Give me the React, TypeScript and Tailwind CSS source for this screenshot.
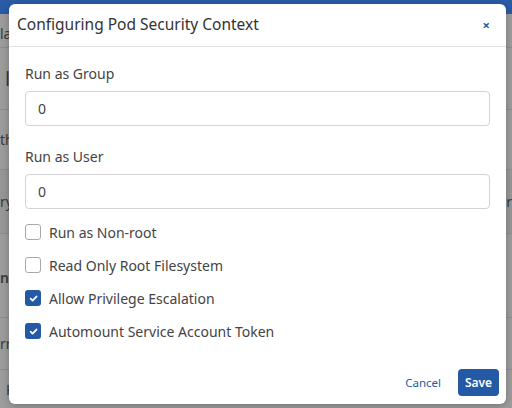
const checks = [
  { label: 'Run as Non-root', on: false },
  { label: 'Read Only Root Filesystem', on: false },
  { label: 'Allow Privilege Escalation', on: true },
  { label: 'Automount Service Account Token', on: true },
]

function Check({ on }: { on: boolean }) {
  if (on) {
    return (
      <span className="w-4 h-4 rounded-[3px] bg-[#2459a6] flex items-center justify-center shrink-0">
        <svg width="9" height="9" viewBox="0 0 10 10" fill="none">
          <path d="M1.8 5.2 4 7.3 8.3 2.8" stroke="#fff" strokeWidth="2" strokeLinecap="round" strokeLinejoin="round" />
        </svg>
      </span>
    )
  }
  return <span className="w-4 h-4 rounded-[3px] border border-[#a9a9a9] bg-white shrink-0" />
}

function Field({ label, value }: { label: string; value: string }) {
  return (
    <div className="flex flex-col">
      <label className="text-[14px] leading-5 text-[#444]">{label}</label>
      <div className="mt-[7px] h-[35px] rounded-[4px] border border-[#d3d3d3] flex items-center px-3 text-[14px] text-[#444]">
        {value}
      </div>
    </div>
  )
}

export default function App() {
  return (
    <div className="relative w-[512px] h-[408px] overflow-hidden bg-[#9d9d9d] font-['Noto_Sans',sans-serif]">
      {/* page behind the dialog */}
      <div className="h-[14px] bg-[#2a5ba6]" />
      <div className="h-[34px] border-b border-[#8e8e8e] flex items-end pb-[3px] text-[14px] text-[#3a3a3a]">la</div>
      <div className="h-[62px] border-b border-[#8e8e8e] flex items-center pl-[5px] text-[20px] text-[#3a3a3a]">l</div>
      <div className="h-[60px] border-b border-[#8e8e8e] flex items-center text-[14px] text-[#3a3a3a]">th</div>
      <div className="h-[64px] border-b border-[#8e8e8e] bg-[#989898] flex items-center justify-between text-[14px] text-[#3a3a3a]">
        <span>ry</span>
        <span>r</span>
      </div>
      <div className="h-[84px] border-b border-[#8e8e8e] flex items-center pt-[4px] text-[14px] font-semibold text-[#3a3a3a]">nd</div>
      <div className="h-[52px] border-b border-[#8e8e8e] flex items-center text-[14px] text-[#3a3a3a]">rn</div>
      <div className="h-[38px] flex items-center pl-[6px] text-[14px] text-[#3a3a3a]">K</div>

      {/* dialog */}
      <div className="absolute left-[9px] top-[4px] w-[497px] h-[400px] bg-white rounded-[6px] shadow-[0_2px_8px_rgba(0,0,0,0.25)] flex flex-col">
        <div className="h-[43px] shrink-0 border-b border-[#e3e3e3] flex items-center justify-between pl-2 pr-[16px]">
          <h2 className="text-[15.5px] text-[#333]">Configuring Pod Security Context</h2>
          <span className="text-[#2459a6] text-[13px] font-bold leading-none">×</span>
        </div>
        <div className="flex-1 flex flex-col px-4 pt-[17px]">
          <Field label="Run as Group" value="0" />
          <div className="mt-[21px]">
            <Field label="Run as User" value="0" />
          </div>
          <div className="mt-[13px] flex flex-col gap-[13px]">
            {checks.map(c => (
              <div key={c.label} className="h-5 flex items-center gap-2 text-[14px] text-[#444]">
                <Check on={c.on} />
                <span>{c.label}</span>
              </div>
            ))}
          </div>
        </div>
        <div className="flex items-center justify-end gap-[17px] pr-[7px] pb-[8px]">
          <span className="text-[11.5px] text-[#2459a6]">Cancel</span>
          <button className="h-[27px] w-[41px] rounded-[4px] bg-[#2459a6] text-white text-[12px] font-semibold">Save</button>
        </div>
      </div>
    </div>
  )
}
